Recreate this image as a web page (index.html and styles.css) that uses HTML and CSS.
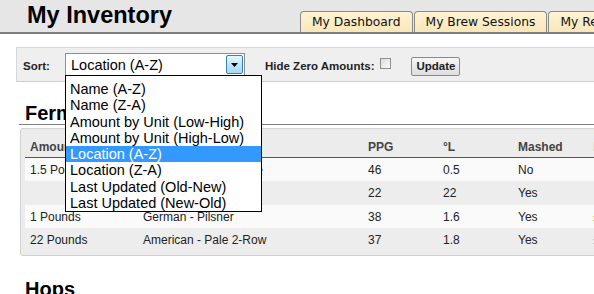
FILE: index.html
```html
<!DOCTYPE html>
<html lang="en">
<head>
  <meta charset="UTF-8" />
  <meta name="viewport" content="width=device-width, initial-scale=1.0"/>
  <title>My Inventory</title>
  <link rel="stylesheet" href="styles.css">
</head>
<body>
  <div class="page">
    <header class="top">
      <h1 class="title">My Inventory</h1>
      <nav class="tabs">
        <a class="tab" href="#">My Dashboard</a>
        <a class="tab" href="#">My Brew Sessions</a>
        <a class="tab" href="#">My Recipes</a>
      </nav>
    </header>

    <main class="content">
      <!-- Sort bar -->
      <form class="sortbar">
        <label class="lbl sort-lbl">Sort:</label>
        <div class="select">
          <span class="select-value">Location (A-Z)</span>
          <span class="select-btn">
            <svg width="7" height="4" viewBox="0 0 7 4"><path d="M0 0H7L3.5 4Z" fill="#000"/></svg>
          </span>
          <ul class="select-list">
            <li>Name (A-Z)</li>
            <li>Name (Z-A)</li>
            <li>Amount by Unit (Low-High)</li>
            <li>Amount by Unit (High-Low)</li>
            <li class="active">Location (A-Z)</li>
            <li>Location (Z-A)</li>
            <li>Last Updated (Old-New)</li>
            <li>Last Updated (New-Old)</li>
          </ul>
        </div>
        <label class="lbl hide-lbl">Hide Zero Amounts:</label>
        <span class="check"></span>
        <button type="button" class="btn">Update</button>
      </form>

      <!-- Fermentables -->
      <section class="inv">
        <h2 class="inv-title">Fermentables</h2>
        <div class="inv-box">
          <table class="inv-table">
            <colgroup>
              <col class="c-amount"><col class="c-name"><col class="c-num"><col class="c-num"><col class="c-num"><col class="c-extra">
            </colgroup>
            <thead>
              <tr><th>Amount</th><th>Name</th><th>PPG</th><th>°L</th><th>Mashed</th><th class="extra">Location</th></tr>
            </thead>
            <tbody>
              <tr><td>1.5 Pounds</td><td>Corn Sugar - Dextrose</td><td>46</td><td>0.5</td><td>No</td><td></td></tr>
              <tr><td></td><td>Caramel 20L</td><td>22</td><td>22</td><td>Yes</td><td></td></tr>
              <tr><td>1 Pounds</td><td>German - Pilsner</td><td>38</td><td>1.6</td><td>Yes</td><td class="edit">±</td></tr>
              <tr><td>22 Pounds</td><td>American - Pale 2-Row</td><td>37</td><td>1.8</td><td>Yes</td><td class="edit">±</td></tr>
            </tbody>
          </table>
        </div>
      </section>

      <!-- Hops -->
      <section class="inv">
        <h2 class="inv-title">Hops</h2>
      </section>
    </main>
  </div>
</body>
</html>
```

FILE: styles.css
```css
* {
  margin: 0;
  padding: 0;
  box-sizing: border-box;
}
body {
  font-family: "Liberation Sans", Arial, sans-serif;
  color: #222;
  background: #fff;
  overflow: hidden;
}
.page {
  width: 820px;
}

/* Header */
.top {
  display: flex;
  height: 34px;
  background: #e6e6e6;
  border-bottom: 2px solid #7d7d7d;
}
.title {
  width: 300px;
  padding: 3px 0 0 27px;
  font-size: 23.5px;
  line-height: 24px;
  color: #000;
}
.tabs {
  display: flex;
  gap: 1px;
  align-self: flex-end;
}
.tab {
  display: block;
  height: 21px;
  padding: 0 11px;
  border: 1px solid #8a8a8a;
  border-bottom: none;
  border-radius: 4px 4px 0 0;
  background: linear-gradient(#fff3d6, #fae7b8);
  font-family: "DejaVu Sans", Verdana, sans-serif;
  font-size: 12.3px;
  line-height: 20px;
  color: #111;
  text-decoration: none;
}

/* Sort bar */
.content {
  padding-left: 16px;
}
.sortbar {
  display: flex;
  align-items: flex-start;
  height: 35px;
  margin-top: 13px;
  padding-left: 6px;
  background: #efefef;
  border: 1px solid #d8d8d8;
  border-right: none;
  border-bottom-color: #cfcfcf;
}
.lbl {
  margin-top: 11px;
  font-size: 11.5px;
  font-weight: bold;
  line-height: 14px;
  color: #222;
}
.sort-lbl {
  width: 42px;
}
.hide-lbl {
  margin-left: 20px;
}
.select {
  position: relative;
  display: flex;
  width: 180px;
  height: 23px;
  margin-top: 5px;
  background: #fff;
  border: 1px solid #8e8f8f;
}
.select-value {
  flex: 1;
  padding: 3px 0 0 5px;
  font-size: 14.5px;
  line-height: 17px;
  color: #000;
}
.select-btn {
  display: flex;
  align-items: center;
  justify-content: center;
  width: 17px;
  margin: 1px;
  border: 1px solid #3c7fb1;
  border-radius: 2px;
  background: linear-gradient(#eaf6fd, #bee6fd 50%, #a7d9f5);
}
.select-list {
  position: absolute;
  top: 100%;
  left: -1px;
  width: 197px;
  padding-top: 5px;
  list-style: none;
  background: #fff;
  border: 1px solid #000;
  z-index: 5;
}
.select-list li {
  padding-left: 4px;
  font-size: 14.5px;
  line-height: 16.3px;
  color: #000;
  white-space: nowrap;
}
.select-list li.active {
  background: #3399ff;
  color: #fff;
}
.check {
  width: 11px;
  height: 11px;
  margin: 10px 0 0 6px;
  border: 1px solid #8f8f8f;
  background: linear-gradient(135deg, #dcdcdc, #fbfbfb);
}
.btn {
  height: 19px;
  margin: 9px 0 0 20px;
  padding: 0 4px;
  border: 1px solid #8a8a8a;
  border-radius: 2px;
  background: linear-gradient(#f6f6f6, #dedede);
  font-family: inherit;
  font-size: 11.5px;
  font-weight: bold;
  line-height: 17px;
  color: #222;
}

/* Inventory sections */
.inv {
  margin-top: 21px;
  margin-left: 3px;
}
.inv + .inv {
  margin-top: 23px;
}
.inv-title {
  padding-left: 6px;
  font-size: 20px;
  line-height: 21px;
  color: #000;
  border-bottom: 1px solid #808080;
}
.inv-box {
  margin: 3px 0 0 1px;
  padding: 4px;
  background: #ececec;
  border: 1px solid #d2d2d2;
  border-radius: 3px;
}
.inv-table {
  border-collapse: collapse;
  table-layout: fixed;
  width: 663px;
  font-size: 12px;
}
.c-amount { width: 113px; }
.c-name { width: 225px; }
.c-num { width: 75px; }
.c-extra { width: 100px; }
.inv-table th {
  padding: 7px 5px 3px;
  text-align: left;
  line-height: 14px;
  color: #444;
  border-bottom: 1px solid #555;
}
.inv-table th.extra {
  color: #e6d58e;
}
.inv-table td {
  padding: 5px 5px 4.3px;
  line-height: 14px;
  color: #222;
  white-space: nowrap;
}
.inv-table tbody tr:nth-child(odd) {
  background: #fafafa;
}
.inv-table tbody tr:nth-child(even) {
  background: #ededed;
}
.inv-table td.edit {
  color: #e6a23c;
}
```
